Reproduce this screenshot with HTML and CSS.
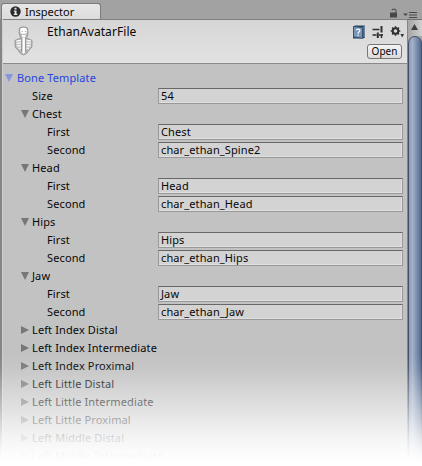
FILE: index.html
```html
<!DOCTYPE html>
<html lang="en">
<head>
<meta charset="utf-8">
<title>Inspector</title>
<link rel="stylesheet" href="styles.css">
</head>
<body>
<div class="window">
  <div class="tabbar">
    <div class="tab">
      <svg class="info" width="11" height="11" viewBox="0 0 11 11"><circle cx="5.5" cy="5.5" r="5.2" fill="#2b2b2b"/><path d="M4.5 1.8h2v1.6h-2zM3.8 4.5h2.7v3.3h.8v1.1H3.8V7.8h.8V5.5h-.8z" fill="#e8e8e8"/></svg>
      <span class="tabname">Inspector</span>
    </div>
    <svg class="tabtools" width="30" height="12" viewBox="0 0 30 12">
      <path d="M1 4.500h7V9.500H1z" fill="#484848"/><path d="M3 2.600C3 .9 7 .3 7 3v2" fill="none" stroke="#555" stroke-width="1.2"/>
      <path d="M14 5.500h5L16.500 8zM20 4h8v1h-8zM20 6.500h8v1h-8zM20 9h8v1h-8z" fill="#484848"/>
    </svg>
  </div>
  <div class="main">
    <div class="content">
      <div class="header">
        <svg class="avatar" width="20" height="30" viewBox="0 0 20 30">
          <path d="M5.500 2Q9.500-.5 13.500 2L14 8 12.500 12 18 14.500 17.800 21 15 24 13 27 9.500 29 6 27 4 24 1.200 21 1 14.500 7 12 5 7z" fill="#bdbdbd" stroke="#959595" stroke-width="1"/>
          <path d="M6.500 2.500Q9.500 1 12.500 2.500L13 6 11.500 8H8L6.200 6z" fill="#fff"/>
          <path d="M8 8.800h3.500v2H8zM8.500 11.500h2.400v15L9.700 28l-1.200-1.500z" fill="#fff"/>
          <path d="M7.300 14.500 2.500 15M7.300 17 2.500 17.500M7.300 19.500 2.800 20M7.300 22 4.500 22.500M12.200 14.500 17 15M12.200 17 17 17.500M12.200 19.500 16.700 20M12.200 22 15 22.500" stroke="#f4f4f4" stroke-width="1.300"/>
          <path d="M7.500 5.500h1.500M10.700 5.500h1.500M8.500 8.300h3" stroke="#aaa" stroke-width=".8"/>
          <path d="M7.700 12v14M11.700 12v14" stroke="#858585" stroke-width=".8"/>
        </svg>
        <div class="title">EthanAvatarFile</div>
        <div class="actions">
          <svg width="54" height="14" viewBox="0 0 54 14">
            <path d="M1 1.500 3 .5H13V12.500L11 13.500H1z" fill="#27425f"/>
            <path d="M1.500 1.500 10.500 2.500V13.200L1.500 12z" fill="#7896b8" stroke="#304c6c" stroke-width=".8"/>
            <path d="M11.200 2.500 12.200 1.500V12" fill="none" stroke="#c4d0dc" stroke-width=".7"/>
            <path d="M4.300 5.200C4.500 3.500 8 3.700 7.800 5.600 7.700 6.900 6 7 6 8.700M6 9.800V11" fill="none" stroke="#fff" stroke-width="1.200"/>
            <path d="M20.500 4.500h7M20.500 10h4M27 10h4" stroke="#303030" stroke-width="1.600"/>
            <path d="M29.500 1v6.500M25.800 7.500v5.500" stroke="#303030" stroke-width="2"/>
            <path d="M29.500 9v4" stroke="#303030" stroke-width="1.500"/>
            <circle cx="43.500" cy="6" r="2.800" fill="none" stroke="#303030" stroke-width="2"/>
            <path d="M43.500 1.200v2M43.500 8.800v2M38.700 6h2M46.300 6h2M40.100 2.600l1.400 1.400M45.500 8l1.400 1.400M40.100 9.400l1.400-1.400M45.500 4l1.400-1.400" stroke="#303030" stroke-width="1.600"/>
            <path d="M48.500 9H52L50.200 12.500z" fill="#303030"/>
          </svg>
          <div class="open">Open</div>
        </div>
      </div>
      <div class="tree">
        <div class="row root"><i class="down"></i><span class="label">Bone Template</span></div>
        <div class="row l1"><span class="label">Size</span><span class="field">54</span></div>
        <div class="row l1"><i class="down"></i><span class="label">Chest</span></div>
        <div class="row l2"><span class="label">First</span><span class="field">Chest</span></div>
        <div class="row l2"><span class="label">Second</span><span class="field">char_ethan_Spine2</span></div>
        <div class="row l1"><i class="down"></i><span class="label">Head</span></div>
        <div class="row l2"><span class="label">First</span><span class="field">Head</span></div>
        <div class="row l2"><span class="label">Second</span><span class="field">char_ethan_Head</span></div>
        <div class="row l1"><i class="down"></i><span class="label">Hips</span></div>
        <div class="row l2"><span class="label">First</span><span class="field">Hips</span></div>
        <div class="row l2"><span class="label">Second</span><span class="field">char_ethan_Hips</span></div>
        <div class="row l1"><i class="down"></i><span class="label">Jaw</span></div>
        <div class="row l2"><span class="label">First</span><span class="field">Jaw</span></div>
        <div class="row l2"><span class="label">Second</span><span class="field">char_ethan_Jaw</span></div>
        <div class="row l1"><i class="right"></i><span class="label">Left Index Distal</span></div>
        <div class="row l1"><i class="right"></i><span class="label">Left Index Intermediate</span></div>
        <div class="row l1"><i class="right"></i><span class="label">Left Index Proximal</span></div>
        <div class="row l1"><i class="right"></i><span class="label">Left Little Distal</span></div>
        <div class="row l1"><i class="right"></i><span class="label">Left Little Intermediate</span></div>
        <div class="row l1"><i class="right"></i><span class="label">Left Little Proximal</span></div>
        <div class="row l1"><i class="right"></i><span class="label">Left Middle Distal</span></div>
        <div class="row l1"><i class="right"></i><span class="label">Left Middle Intermediate</span></div>
      </div>
    </div>
    <div class="scrollbar">
      <svg class="up" width="14" height="16" viewBox="0 0 14 16"><path d="M3 10 6.500 4 10 10z" fill="#404040"/></svg>
      <div class="thumb"></div>
    </div>
  </div>
  <div class="fade"></div>
</div>
</body>
</html>
```

FILE: styles.css
```css
* { box-sizing: border-box; }
body {
  margin: 0;
  background: #fff;
  font: 11px/18px "Noto Sans", "Open Sans", sans-serif;
  letter-spacing: 0.12px;
  color: #080808;
}
.window {
  position: relative;
  width: 422px;
  height: 466px;
  overflow: hidden;
  display: flex;
  flex-direction: column;
  background: #a2a2a2;
}
.tabbar {
  height: 19px;
  flex: none;
  display: flex;
  justify-content: space-between;
  padding-left: 1px;
}
.tab {
  width: 100px;
  height: 16px;
  margin-top: 3px;
  padding-left: 8px;
  display: flex;
  align-items: center;
  background: linear-gradient(#e6e6e6, #dcdcdc);
  border: 1px solid #7c7c7c;
  border-bottom: 0;
  border-radius: 3px 3px 0 0;
}
.info { flex: none; }
.tabname { margin-left: 4px; line-height: 14px; letter-spacing: 0; }
.tabtools { margin: 8px 3px 0 0; }
.main {
  flex: 1;
  display: flex;
  min-height: 0;
  border-left: 2px solid #858585;
}
.content {
  flex: 1;
  background: #c2c2c2;
  border-left: 1px solid #cfcfcf;
}
.header {
  height: 45px;
  display: flex;
  background: linear-gradient(#d6d6d6, #e2e2e2);
  border-top: 1px solid #808080;
  border-bottom: 1px solid #8a8a8a;
}
.avatar { margin: 6px 0 0 11px; }
.title {
  margin: 3px 0 0 13px;
  font-size: 12px;
  letter-spacing: 0.08px;
}
.actions {
  margin: 5px 1px 0 auto;
  display: flex;
  flex-direction: column;
  align-items: flex-end;
}
.open {
  width: 35px;
  height: 15px;
  margin: 5px 4px 0 0;
  border: 1px solid #777;
  border-radius: 3px;
  background: linear-gradient(#f4f4f4, #dadada);
  text-align: center;
  font-size: 10px;
  line-height: 13px;
  letter-spacing: 0;
}
.tree { padding-top: 5px; }
.row { height: 18px; display: flex; align-items: center; padding-left: 2px; }
.label { white-space: nowrap; }
.row.root { color: #2645e0; }
.row.root .label { margin-left: 4px; }
.l1 { padding-left: 18px; }
.l1 .label { margin-left: 3px; }
.l1 .label:first-child { margin-left: 11px; }
.l2 { padding-left: 44px; }
.down, .right { width: 8px; height: 8px; flex: none; background: #777; }
.down { clip-path: polygon(0 0, 100% 0, 50% 100%); }
.right { clip-path: polygon(0 0, 100% 50%, 0 100%); }
.root .down { background: #8795dc; }
.field {
  width: 245px;
  height: 16px;
  margin: 0 4px 0 auto;
  padding-left: 2px;
  line-height: 14px;
  background: #d3d3d3;
  border: 1px solid #999;
  border-top-color: #686868;
  box-shadow: inset -1px -1px #e0e0e0;
}
.scrollbar {
  width: 15px;
  display: flex;
  flex-direction: column;
  border-top: 1px solid #707070;
  border-left: 1px solid #858585;
  background: #a8a8a8;
}
.up { flex: none; background: linear-gradient(90deg, #a6a6a6, #d0d0d0); }
.thumb {
  flex: 1;
  width: 14px;
  border: 1px solid #41516e;
  border-radius: 7px 7px 0 0;
  background: linear-gradient(90deg, #8999b5, #a5b2c7 28%, #7488a9 70%, #526b91);
}
.fade {
  position: absolute;
  left: 0;
  right: 0;
  top: 354px;
  bottom: 0;
  background: linear-gradient(rgba(255,255,255,0), rgba(255,255,255,.08) 13%, rgba(255,255,255,.25) 27%, rgba(255,255,255,.44) 43%, rgba(255,255,255,.64) 59%, rgba(255,255,255,.83) 75%, rgba(255,255,255,.95) 88%, #fff 96%);
}
```
